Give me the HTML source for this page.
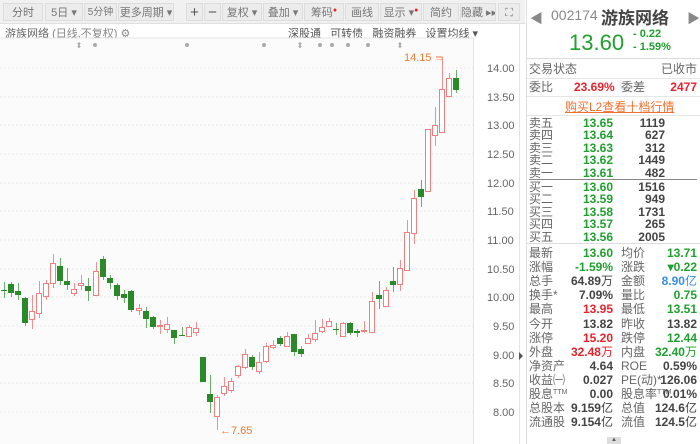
<!DOCTYPE html><html><head><meta charset="utf-8"><style>
*{margin:0;padding:0;box-sizing:border-box}
body{width:700px;height:444px;overflow:hidden;background:#fff;font-family:"Liberation Sans","Noto Sans CJK SC",sans-serif;position:relative;font-size:12px}
.a{position:absolute;white-space:nowrap}
.tb{position:absolute;top:0;left:0;width:525px;height:24px;background:#f1f1f1;border-bottom:1px solid #e0e0e0}
.tb span{position:absolute;top:3px;height:18px;line-height:18px;font-size:11px;color:#777;text-align:center;background:#ececec;border:1px solid #ddd;white-space:nowrap;overflow:hidden}
.g{color:#1fa02f}.r{color:#e8222c}.k{color:#444}.l{color:#666}
.rp{position:absolute;left:526px;top:0;width:174px;height:444px;border-left:1px solid #ddd;background:#fff}
.row{position:absolute;left:2px;width:170px;height:14px;font-size:12px;line-height:14px}
.row b{font-weight:bold;position:absolute}
.row i{font-style:normal;position:absolute;color:#666}
sup{line-height:0;font-size:7px;vertical-align:4px}
</style></head><body>
<div class="tb">
<span style="left:3px;width:40px">分时</span>
<span style="left:45px;width:38px">5日 ▾</span>
<span style="left:84px;width:33px;font-size:10px">5分钟</span>
<span style="left:118px;width:56px">更多周期 ▾</span>
<span style="left:186px;width:17px;font-size:15px;color:#555">+</span>
<span style="left:204px;width:17px;font-size:15px;color:#555">−</span>
<span style="left:222px;width:40px">复权 ▾</span>
<span style="left:263px;width:40px">叠加 ▾</span>
<span style="left:304px;width:40px">筹码<sup style="color:#e22">●</sup></span>
<span style="left:345px;width:34px">画线</span>
<span style="left:380px;width:42px">显示 ▾<sup style="color:#e22">●</sup></span>
<span style="left:423px;width:36px">简约</span>
<span style="left:460px;width:36px">隐藏 ▸▸</span>
<span style="left:498px;width:22px">⛶</span>
</div>
<div class="a l" style="left:5px;top:25px;font-size:11px">游族网络 <span style="color:#888">(日线,不复权) ⚙</span></div>
<div class="a l" style="left:288px;top:25px;font-size:11px;color:#555">深股通&nbsp;&nbsp;&nbsp;可转债&nbsp;&nbsp;&nbsp;融资融券&nbsp;&nbsp;&nbsp;设置均线 ▾</div>
<svg class="a" style="left:0;top:0" width="526" height="444">
<rect x="0" y="38" width="473" height="406" fill="#fbfbfb"/>
<line x1="0" y1="38" x2="473" y2="38" stroke="#e6e6e6"/>
<line x1="473.5" y1="38" x2="473.5" y2="444" stroke="#e4e4e4"/>
<line x1="519.5" y1="24" x2="519.5" y2="444" stroke="#e4e4e4"/>
<g stroke="#e8e8e8" stroke-dasharray="2,2">
<line x1="0" y1="68" x2="473" y2="68"/><line x1="0" y1="97" x2="473" y2="97"/><line x1="0" y1="125" x2="473" y2="125"/><line x1="0" y1="154" x2="473" y2="154"/><line x1="0" y1="183" x2="473" y2="183"/><line x1="0" y1="211" x2="473" y2="211"/><line x1="0" y1="240" x2="473" y2="240"/><line x1="0" y1="269" x2="473" y2="269"/><line x1="0" y1="297" x2="473" y2="297"/><line x1="0" y1="326" x2="473" y2="326"/><line x1="0" y1="355" x2="473" y2="355"/><line x1="0" y1="383" x2="473" y2="383"/><line x1="0" y1="412" x2="473" y2="412"/>
</g>
<g fill="#aaa" font-size="8"><text x="79" y="48" text-anchor="middle">⬍</text><text x="400" y="48" text-anchor="middle">⬍</text><text x="300" y="48" text-anchor="middle">⬍</text>
<circle cx="95" cy="45" r="2"/><circle cx="187" cy="45" r="2"/><circle cx="264" cy="45" r="2"/><circle cx="320" cy="45" r="2"/><circle cx="332" cy="45" r="2"/><circle cx="348" cy="45" r="2"/><circle cx="368" cy="45" r="2"/></g>
<g font-size="11" fill="#666" font-family="Liberation Sans">
<text x="487" y="72">14.00</text><text x="487" y="101">13.50</text><text x="487" y="129">13.00</text><text x="487" y="158">12.50</text><text x="487" y="187">12.00</text><text x="487" y="215">11.50</text><text x="487" y="244">11.00</text><text x="487" y="273">10.50</text><text x="487" y="301">10.00</text><text x="493" y="330">9.50</text><text x="493" y="359">9.00</text><text x="493" y="387">8.50</text><text x="493" y="416">8.00</text>
</g>
<path d="M519 352 L523 356 L519 360Z" fill="#555"/>
<text x="404" y="61" font-size="11" fill="#f07830">14.15 →</text>
<line x1="442.5" y1="57" x2="442.5" y2="60" stroke="#f07830"/>
<path d="M436 57 H442.5" stroke="#f07830"/>
<text x="220" y="434" font-size="11" fill="#f07830">←7.65</text>
<line x1="217.5" y1="425" x2="217.5" y2="430" stroke="#f07830"/>
<g id="c"></g>
</svg>
<script>
var d=[[4,290,290,282,298,0],[11,284,293,282,297,0],[18,291,295,283,300,0],[25,298,323,297,326,0],[32,311,319,295,329,1],[39,293,313,281,318,1],[46,283,296,280,300,1],[53,263,283,254,288,1],[60,266,281,258,285,0],[67,281,285,268,290,0],[74,289,293,283,296,1],[81,283,285,275,290,1],[88,286,291,278,301,0],[96,271,295,262,296,1],[103,259,277,256,280,0],[110,278,283,275,289,0],[117,285,296,283,300,0],[124,294,298,290,303,0],[131,291,310,290,312,0],[139,308,310,304,315,1],[146,311,319,307,328,0],[153,317,327,316,329,0],[160,325,326,320,334,1],[167,324,329,317,333,1],[174,330,338,330,344,0],[182,335,335,327,335,0],[189,327,336,325,337,1],[196,328,332,322,336,1],[203,357,382,357,382,0],[210,394,402,375,413,0],[217,397,416,395,430,1],[224,386,393,377,396,1],[231,381,390,378,393,1],[238,366,375,365,378,1],[245,354,367,349,369,1],[252,357,367,355,370,0],[259,362,371,352,374,1],[266,346,361,343,363,1],[273,345,347,340,349,1],[280,338,344,336,346,0],[287,336,346,332,346,1],[294,334,352,334,356,0],[301,349,354,346,357,0],[308,338,343,334,344,1],[315,333,339,320,342,1],[322,327,331,319,333,1],[329,321,326,318,327,1],[336,329,329,323,335,0],[343,323,336,322,336,1],[350,323,333,322,335,0],[357,331,333,329,337,0],[364,330,330,321,333,1],[372,301,332,292,333,1],[379,295,299,281,309,0],[386,290,306,287,307,1],[393,281,285,267,292,0],[400,268,284,260,291,1],[407,232,270,220,271,1],[414,198,233,190,244,1],[421,189,197,180,207,0],[428,129,191,129,192,1],[435,125,135,107,146,1],[442,89,132,57,133,1],[449,78,96,73,97,1],[456,78,90,70,93,0]];
var s='';d.forEach(function(c){var x=c[0]+.5;s+='<line x1="'+x+'" y1="'+c[3]+'" x2="'+x+'" y2="'+c[4]+'" stroke="'+(c[5]?'#f09090':'#6ab06a')+'"/>';var h=Math.max(1,c[2]-c[1]);if(c[5])s+='<rect x="'+(c[0]-2.5)+'" y="'+(c[1]+.5)+'" width="5" height="'+h+'" fill="#fff" stroke="#f08080"/>';else s+='<rect x="'+(c[0]-3)+'" y="'+c[1]+'" width="6" height="'+h+'" fill="#2a8a2a"/>';});
document.getElementById('c').innerHTML=s;
</script>
<div class="rp">
<div class="a" style="left:3px;top:8px;color:#888;font-size:13px">◀</div>
<div class="a" style="left:24px;top:7px;color:#888;font-size:14px">002174</div>
<div class="a" style="left:74px;top:4px;color:#444;font-size:17px;font-weight:bold">游族网络</div>
<div class="a" style="left:160px;top:8px;color:#888;font-size:13px">▶</div>
<div class="a g" style="left:42px;top:30px;font-size:22px">13.60</div>
<div class="a g" style="left:106px;top:28px;font-size:11px;font-weight:bold">- 0.22</div>
<div class="a g" style="left:106px;top:41px;font-size:11px;font-weight:bold">- 1.59%</div>
<div class="a" style="left:0;top:58px;width:174px;border-top:1px solid #ddd"></div>
<div class="row l" style="top:62px"><i style="left:0">交易状态</i><i style="right:2px">已收市</i></div>
<div class="a" style="left:0;top:78px;width:174px;border-top:1px solid #e6e6e6"></div>
<div class="row" style="top:80px"><i style="left:0">委比</i><b class="r" style="left:45px">23.69%</b><i style="left:92px">委差</i><b class="r" style="right:2px">2477</b></div>
<div class="a" style="left:0;top:96px;width:174px;border-top:1px solid #e6e6e6"></div>
<div class="a" style="left:38px;top:98px;font-size:12px;color:#f07030;text-decoration:underline">购买L2查看十档行情</div>
<div class="a" style="left:0;top:115px;width:174px;border-top:1px solid #e6e6e6"></div>
<div style="position:absolute;top:116px;left:0;width:174px">
<div class="row" style="top:0"><i style="left:0">卖五</i><b class="g" style="right:86px">13.65</b><b class="k" style="right:34px">1119</b></div>
<div class="row" style="top:12.4px"><i style="left:0">卖四</i><b class="g" style="right:86px">13.64</b><b class="k" style="right:34px">627</b></div>
<div class="row" style="top:24.8px"><i style="left:0">卖三</i><b class="g" style="right:86px">13.63</b><b class="k" style="right:34px">312</b></div>
<div class="row" style="top:37.2px"><i style="left:0">卖二</i><b class="g" style="right:86px">13.62</b><b class="k" style="right:34px">1449</b></div>
<div class="row" style="top:49.6px"><i style="left:0">卖一</i><b class="g" style="right:86px">13.61</b><b class="k" style="right:34px">482</b></div>
<div class="a" style="left:2px;top:63px;width:168px;border-top:1px solid #888"></div>
<div class="row" style="top:64px"><i style="left:0">买一</i><b class="g" style="right:86px">13.60</b><b class="k" style="right:34px">1516</b></div>
<div class="row" style="top:76.4px"><i style="left:0">买二</i><b class="g" style="right:86px">13.59</b><b class="k" style="right:34px">949</b></div>
<div class="row" style="top:88.8px"><i style="left:0">买三</i><b class="g" style="right:86px">13.58</b><b class="k" style="right:34px">1731</b></div>
<div class="row" style="top:101.2px"><i style="left:0">买四</i><b class="g" style="right:86px">13.57</b><b class="k" style="right:34px">265</b></div>
<div class="row" style="top:113.6px"><i style="left:0">买五</i><b class="g" style="right:86px">13.56</b><b class="k" style="right:34px">2005</b></div>
</div>
<div class="a" style="left:0;top:243px;width:174px;border-top:1px solid #ddd"></div>
<div style="position:absolute;top:246px;left:0;width:174px">
<div class="row" style="top:0"><i style="left:0">最新</i><b class="g" style="right:86px">13.60</b><i style="left:92px">均价</i><b class="g" style="right:2px">13.71</b></div>
<div class="row" style="top:14.1px"><i style="left:0">涨幅</i><b class="g" style="right:86px">-1.59%</b><i style="left:92px">涨跌</i><b class="g" style="right:2px">▾0.22</b></div>
<div class="row" style="top:28.2px"><i style="left:0">总手</i><b class="k" style="right:86px">64.89<span style="font-weight:normal">万</span></b><i style="left:92px">金额</i><b style="right:2px;color:#3a8ee6">8.90<span style="font-weight:normal">亿</span></b></div>
<div class="row" style="top:42.3px"><i style="left:0">换手*</i><b class="k" style="right:86px">7.09%</b><i style="left:92px">量比</i><b class="g" style="right:2px">0.75</b></div>
<div class="row" style="top:56.4px"><i style="left:0">最高</i><b class="r" style="right:86px">13.95</b><i style="left:92px">最低</i><b class="g" style="right:2px">13.51</b></div>
<div class="row" style="top:70.5px"><i style="left:0">今开</i><b class="k" style="right:86px">13.82</b><i style="left:92px">昨收</i><b class="k" style="right:2px">13.82</b></div>
<div class="row" style="top:84.6px"><i style="left:0">涨停</i><b class="r" style="right:86px">15.20</b><i style="left:92px">跌停</i><b class="g" style="right:2px">12.44</b></div>
<div class="row" style="top:98.7px"><i style="left:0">外盘</i><b class="r" style="right:86px">32.48<span style="font-weight:normal">万</span></b><i style="left:92px">内盘</i><b class="g" style="right:2px">32.40<span style="font-weight:normal">万</span></b></div>
<div class="row" style="top:112.8px"><i style="left:0">净资产</i><b class="k" style="right:86px">4.64</b><i style="left:92px">ROE</i><b class="k" style="right:2px">0.59%</b></div>
<div class="row" style="top:126.9px"><i style="left:0">收益㈠</i><b class="k" style="right:86px">0.027</b><i style="left:92px">PE(动)*</i><b class="k" style="right:2px">126.06</b></div>
<div class="row" style="top:141px"><i style="left:0">股息<sup>TTM</sup></i><b class="k" style="right:86px">0.00</b><i style="left:92px">股息率<sup>TTM</sup></i><b class="k" style="right:2px">0.01%</b></div>
<div class="row" style="top:155.1px"><i style="left:0">总股本</i><b class="k" style="right:86px">9.159<span style="font-weight:normal">亿</span></b><i style="left:92px">总值</i><b class="k" style="right:2px">124.6<span style="font-weight:normal">亿</span></b></div>
<div class="row" style="top:169.2px"><i style="left:0">流通股</i><b class="k" style="right:86px">9.154<span style="font-weight:normal">亿</span></b><i style="left:92px">流值</i><b class="k" style="right:2px">124.5<span style="font-weight:normal">亿</span></b></div>
</div>
<div class="a" style="left:80px;top:437px;width:14px;height:7px;background:#ddd;font-size:6px;text-align:center;line-height:7px;color:#555">▲</div>
</div>
</body></html>
